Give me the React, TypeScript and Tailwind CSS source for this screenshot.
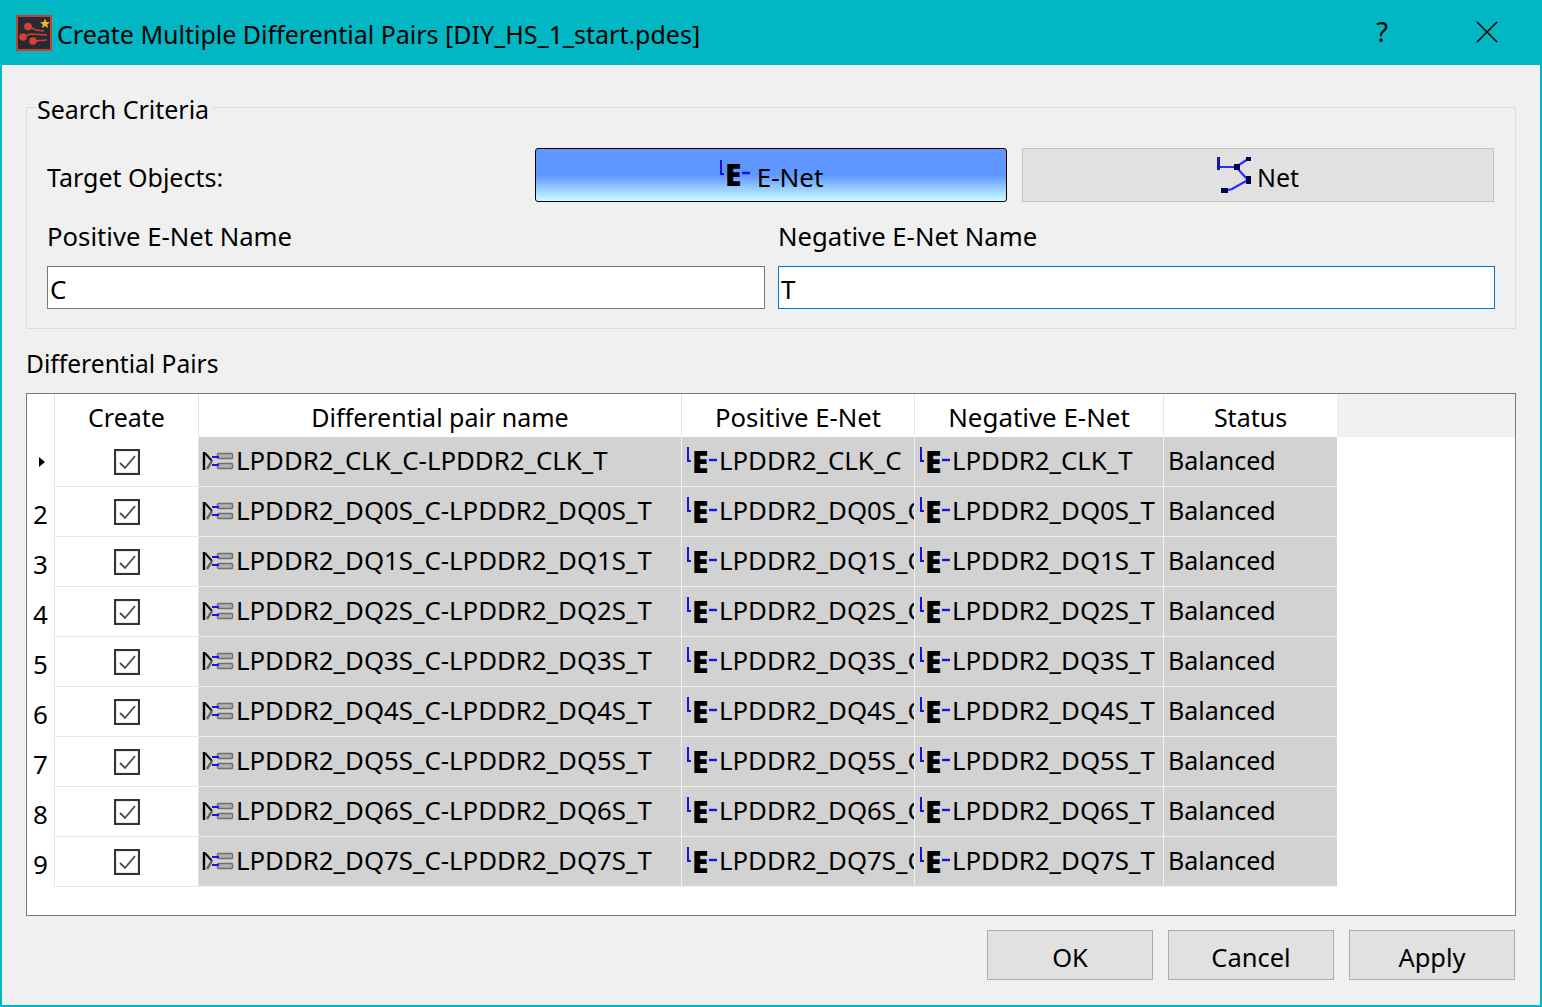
const FONT = "font-['Noto_Sans',sans-serif]"
const COLS = "grid grid-cols-[28px_144px_483px_233px_249px_173px]"

const rows = [
  { name: "LPDDR2_CLK_C-LPDDR2_CLK_T", pos: "LPDDR2_CLK_C", neg: "LPDDR2_CLK_T" },
  { name: "LPDDR2_DQ0S_C-LPDDR2_DQ0S_T", pos: "LPDDR2_DQ0S_C", neg: "LPDDR2_DQ0S_T" },
  { name: "LPDDR2_DQ1S_C-LPDDR2_DQ1S_T", pos: "LPDDR2_DQ1S_C", neg: "LPDDR2_DQ1S_T" },
  { name: "LPDDR2_DQ2S_C-LPDDR2_DQ2S_T", pos: "LPDDR2_DQ2S_C", neg: "LPDDR2_DQ2S_T" },
  { name: "LPDDR2_DQ3S_C-LPDDR2_DQ3S_T", pos: "LPDDR2_DQ3S_C", neg: "LPDDR2_DQ3S_T" },
  { name: "LPDDR2_DQ4S_C-LPDDR2_DQ4S_T", pos: "LPDDR2_DQ4S_C", neg: "LPDDR2_DQ4S_T" },
  { name: "LPDDR2_DQ5S_C-LPDDR2_DQ5S_T", pos: "LPDDR2_DQ5S_C", neg: "LPDDR2_DQ5S_T" },
  { name: "LPDDR2_DQ6S_C-LPDDR2_DQ6S_T", pos: "LPDDR2_DQ6S_C", neg: "LPDDR2_DQ6S_T" },
  { name: "LPDDR2_DQ7S_C-LPDDR2_DQ7S_T", pos: "LPDDR2_DQ7S_C", neg: "LPDDR2_DQ7S_T" },
]

function AppIcon() {
  return (
    <svg width="36" height="36" viewBox="0 0 36 36" className="shrink-0">
      <rect x="1" y="1" width="34" height="34" fill="#252a35" stroke="#c8402f" strokeWidth="2" />
      <path d="M12 11.5 L20 15 L28 16 M7 22 L14 19 L31 20 M17 26 L31 25" stroke="#d0402f" strokeWidth="1.5" fill="none" />
      <circle cx="12" cy="11.5" r="3.8" fill="#d8402f" />
      <circle cx="7" cy="22" r="3.8" fill="#d8402f" />
      <circle cx="17" cy="26" r="3.8" fill="#d8402f" />
      <path d="M29 3.5 L30.4 7 L34 7.2 L31.2 9.4 L32.2 13 L29 11 L25.8 13 L26.8 9.4 L24 7.2 L27.6 7 Z" fill="#f5b51e" />
    </svg>
  )
}

function ENetIcon() {
  return (
    <svg width="33" height="30" viewBox="0 0 33 30" className="shrink-0 overflow-visible">
      <path d="M2 0 V14 H5" stroke="#1414e6" strokeWidth="2" fill="none" />
      <text x="6" y="26" fontFamily="'Noto Sans', sans-serif" fontWeight="900" fontSize="30" fill="#000">E</text>
      <path d="M23 13 H31" stroke="#1414e6" strokeWidth="2.4" />
    </svg>
  )
}

function NetIcon() {
  return (
    <svg width="36" height="38" viewBox="0 0 36 38" className="shrink-0 -ml-px">
      <path d="M2 11 H20 L32 3 M20 11 L32 24 L16 33 L8 35" stroke="#2a2aff" strokeWidth="2.2" fill="none" />
      <rect x="1" y="1" width="3" height="13" fill="#1414c8" />
      <rect x="18" y="8" width="6" height="6" fill="#000050" />
      <rect x="30" y="1" width="5" height="4" fill="#000050" />
      <rect x="30" y="20" width="5" height="8" fill="#000050" />
      <rect x="5" y="32" width="7" height="5" fill="#000050" />
    </svg>
  )
}

function PairIcon() {
  return (
    <svg width="33" height="24" viewBox="0 0 33 24" className="shrink-0">
      <path d="M2 2 V20" stroke="#000" strokeWidth="2.4" />
      <path d="M3 3 L10 11" stroke="#111" strokeWidth="2" />
      <path d="M10 11 L5 19" stroke="#666" strokeWidth="2.4" />
      <rect x="15.5" y="3.5" width="15" height="5" rx="1" fill="#b0b0b0" stroke="#6e6e6e" strokeWidth="1.4" />
      <rect x="15.5" y="13.5" width="15" height="5" rx="1" fill="#b0b0b0" stroke="#6e6e6e" strokeWidth="1.4" />
      <path d="M10 7 H17 M10 15 H17" stroke="#1414e6" strokeWidth="2.2" />
    </svg>
  )
}

function CheckBox() {
  return (
    <svg width="26" height="26" viewBox="0 0 26 26">
      <rect x="1" y="1" width="24" height="24" fill="#fff" stroke="#333" strokeWidth="2.2" />
      <path d="M6 14 L11 19 L21 7" stroke="#4a4a4a" strokeWidth="1.8" fill="none" />
    </svg>
  )
}

function Button({ label }: { label: string }) {
  return (
    <button className="w-[166px] h-[50px] pt-[4px] bg-[#e1e1e1] border border-[#adadad] text-[25.5px] text-black">
      {label}
    </button>
  )
}

export default function App() {
  return (
    <div className={`${FONT} w-[1542px] h-[1007px] flex flex-col bg-[#f0f0f0] border-2 border-t-0 border-[#00b7c3] text-[25px] leading-[36px] text-black overflow-hidden`}>
      {/* Title bar */}
      <div className="h-[65px] -mx-[2px] shrink-0 bg-[#00b7c3] flex items-center pl-[16px]">
        <AppIcon />
        <span className="ml-[5px] mt-[3px] whitespace-nowrap">Create Multiple Differential Pairs [DIY_HS_1_start.pdes]</span>
        <span className="ml-auto mr-[88px] text-[27px] -mt-[2px]">?</span>
        <svg width="22" height="22" viewBox="0 0 22 22" className="mr-[44px] -mt-[2px]">
          <path d="M1 1 L21 21 M21 1 L1 21" stroke="#000" strokeWidth="1.6" />
        </svg>
      </div>

      <div className="flex-1 flex flex-col pl-[24px] pr-[24px]">
        {/* Search Criteria group */}
        <div className="mt-[42px] h-[222px] shrink-0 border border-[#dcdcdc] relative pl-[20px] pr-[21px]">
          <span className="absolute left-[10px] -top-[17px] pr-[4px] bg-[#f0f0f0]">Search Criteria</span>
          <div className="flex items-center mt-[40px] h-[54px]">
            <span className="w-[488px] mt-[4px]">Target Objects:</span>
            <button className="w-[472px] h-[54px] rounded-[3px] border border-black bg-[linear-gradient(to_bottom,#5f96ff_0%,#5f96ff_50%,#ccffff_100%)] flex items-center justify-center">
              <ENetIcon />
              <span className="ml-[5px] mt-[4px] text-[26px]">E-Net</span>
            </button>
            <button className="ml-[15px] w-[472px] h-[54px] border border-[#c4c4c4] bg-[#e1e1e1] flex items-center justify-center">
              <NetIcon />
              <span className="ml-[5px] mt-[4px]">Net</span>
            </button>
          </div>
          <div className="grid grid-cols-[718px_717px] gap-x-[13px] mt-[17px] text-[25.7px]">
            <span>Positive E-Net Name</span>
            <span>Negative E-Net Name</span>
            <div className="h-[43px] mt-[11px] pt-[2px] bg-white border border-[#7a7a7a] pl-[2px] flex items-center text-[26px]">C</div>
            <div className="h-[43px] mt-[11px] pt-[2px] bg-white border border-[#0078d7] pl-[2px] flex items-center text-[26px]">T</div>
          </div>
        </div>

        <div className="mt-[17px] h-[36px] text-[24.6px]">Differential Pairs</div>

        {/* Table */}
        <div className="mt-[11px] w-[1490px] h-[523px] shrink-0 bg-white border border-[#7a7a7a]">
          <div className={`${COLS} grid-rows-[43px] bg-[#f0f0f0]`}>
            <div className="border-r border-[#e6e6e6] bg-white" />
            <div className="bg-white border-r border-[#e6e6e6] text-center pt-[5px]">Create</div>
            <div className="bg-white border-r border-[#e6e6e6] text-center pt-[5px]">Differential pair name</div>
            <div className="bg-white border-r border-[#e6e6e6] text-center pt-[6px] text-[25.7px]">Positive E-Net</div>
            <div className="bg-white border-r border-[#e6e6e6] text-center pt-[5px] text-[25.9px]">Negative E-Net</div>
            <div className="bg-white text-center pt-[5px]">Status</div>
          </div>
          {rows.map((row, i) => (
            <div key={row.name} className={`${COLS} h-[50px] whitespace-nowrap text-[25.8px]`}>
              <div className="border-r border-[#e6e6e6] bg-white flex items-center pl-[6px]">
                {i === 0 ? (
                  <svg width="8" height="12" viewBox="0 0 8 12" className="ml-[5px]">
                    <path d="M1 1 L7 6 L1 11 Z" fill="#000" />
                  </svg>
                ) : (
                  <span className="mt-[4px] text-[26px]">{i + 1}</span>
                )}
              </div>
              <div className="border-r border-b border-[#e6e6e6] flex items-center justify-center">
                <CheckBox />
              </div>
              <div className="bg-[#d2d2d2] border-r border-b border-[#f0f0f0] flex items-center pl-[3px] overflow-hidden">
                <PairIcon />
                <span className="ml-px -mt-[3px]">{row.name}</span>
              </div>
              <div className="bg-[#d2d2d2] border-r border-b border-[#f0f0f0] flex items-center pl-[4px] overflow-hidden">
                <ENetIcon />
                <span className="-mt-[3px]">{row.pos}</span>
              </div>
              <div className="bg-[#d2d2d2] border-r border-b border-[#f0f0f0] flex items-center pl-[4px] overflow-hidden">
                <ENetIcon />
                <span className="-mt-[3px]">{row.neg}</span>
              </div>
              <div className="bg-[#d2d2d2] border-b border-[#f0f0f0] flex items-center pl-[4px] overflow-hidden text-[25px]">
                <span className="-mt-[4px]">Balanced</span>
              </div>
            </div>
          ))}
        </div>

        {/* Footer buttons */}
        <div className="mt-[14px] flex justify-end gap-[15px] pr-[1px]">
          <Button label="OK" />
          <Button label="Cancel" />
          <Button label="Apply" />
        </div>
      </div>
    </div>
  )
}
